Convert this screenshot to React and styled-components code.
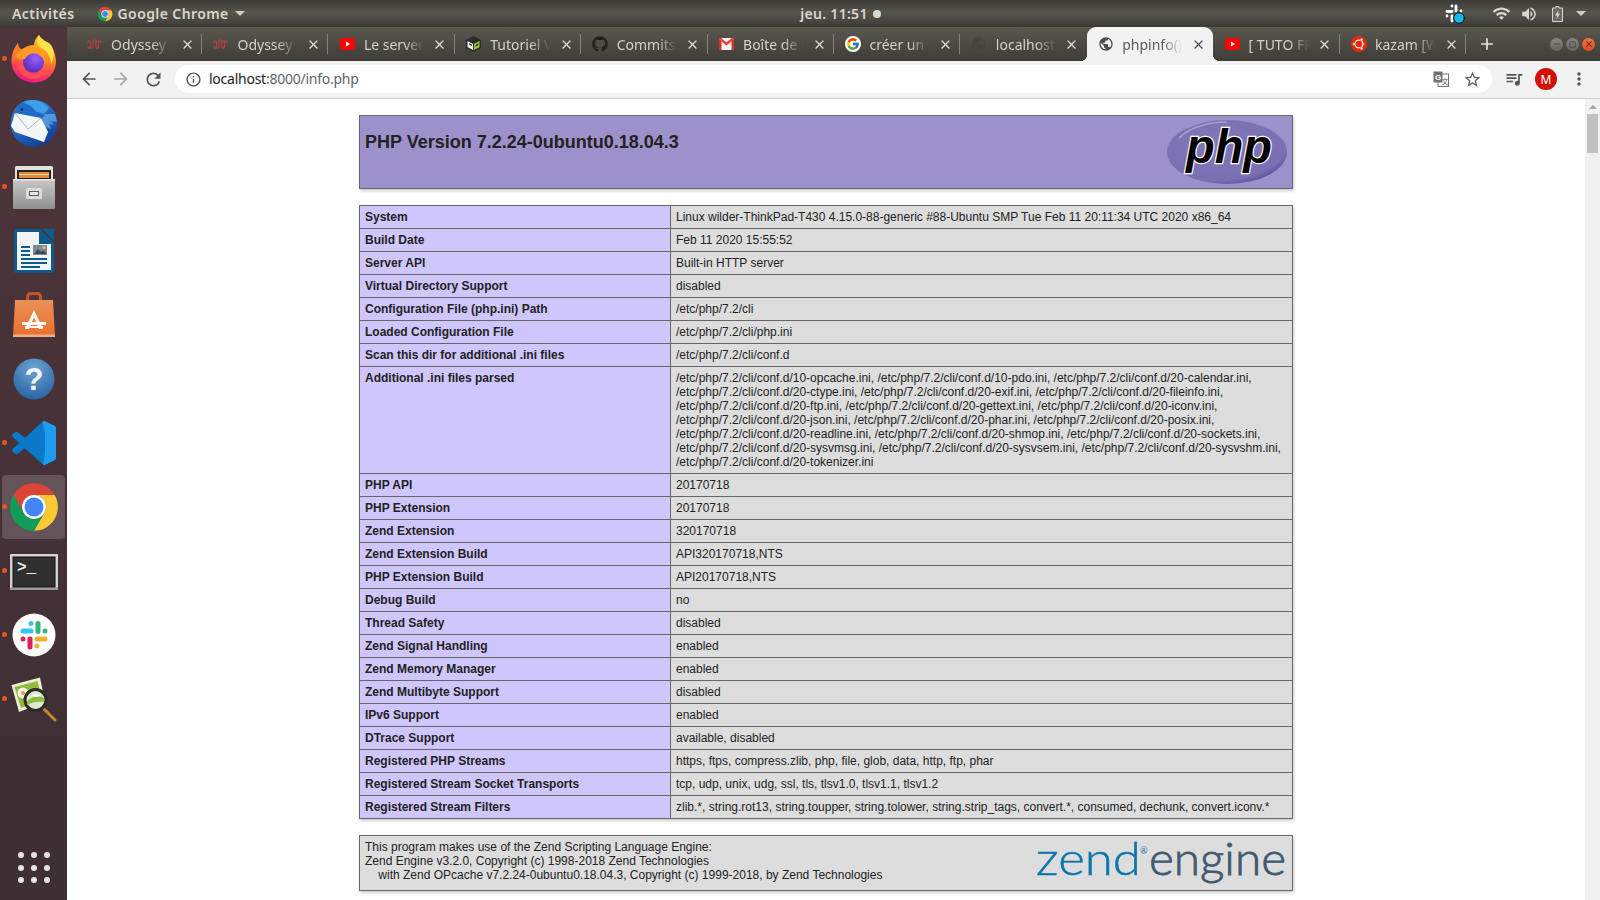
import React from 'react'
import styled, { createGlobalStyle } from 'styled-components'
import { FaGithub } from 'react-icons/fa'
import { FcGoogle } from 'react-icons/fc'
import {
  MdArrowBack, MdArrowForward, MdRefresh, MdInfoOutline, MdStarBorder, MdMoreVert,
  MdQueueMusic, MdPublic, MdWifi, MdVolumeUp, MdClose, MdAdd, MdRemove, MdCropSquare,
} from 'react-icons/md'

const GlobalStyle = createGlobalStyle`
  html, body { margin: 0; padding: 0; height: 100%; overflow: hidden; background: #fff; }
  * { box-sizing: border-box; }
`

const Screen = styled.div`
  width: 1600px;
  height: 900px;
  display: flex;
  flex-direction: column;
  overflow: hidden;
  font-family: "Noto Sans", "Open Sans", sans-serif;
`

/* gnome top bar */
const TopBar = styled.header`
  height: 27px;
  flex: none;
  display: grid;
  grid-template-columns: 1fr auto 1fr;
  align-items: center;
  padding: 0 14px 0 12px;
  background: linear-gradient(#3b3a36, #57544c 45%, #45433e 85%, #3a3935);
  color: #d8d6cf;
  font-size: 14px;
  font-weight: 600;
`
const BarLeft = styled.div`
  display: flex;
  align-items: center;
`
const BarCenter = styled.div`
  display: flex;
  align-items: center;
  gap: 5px;
  margin-left: 83px;
  letter-spacing: 0.3px;
`
const BarRight = styled.div`
  display: flex;
  align-items: center;
  justify-content: flex-end;
  color: #d8d6cf;
`
const Activities = styled.span`
  margin-right: 22px;
  letter-spacing: 0.45px;
`
const AppName = styled.span`
  margin: 0 6px 0 5px;
  letter-spacing: 0.4px;
`
const Caret = styled.span`
  width: 0;
  height: 0;
  border-left: 5px solid transparent;
  border-right: 5px solid transparent;
  border-top: 5px solid #cfcdc6;
`
const RecDot = styled.span`
  width: 8px;
  height: 8px;
  border-radius: 50%;
  background: #d9d8d3;
`
const Tray = styled.span`
  display: flex;
  align-items: center;
  margin-left: ${p => p.$gap}px;
`

const Body = styled.div`
  flex: 1;
  display: flex;
  min-height: 0;
`

/* launcher */
const Dock = styled.nav`
  width: 67px;
  flex: none;
  display: flex;
  flex-direction: column;
  background: linear-gradient(#4e343b, #3d2f34);
`
const DockItem = styled.div`
  position: relative;
  height: 64px;
  flex: none;
  display: flex;
  align-items: center;
  justify-content: center;
  &::before {
    content: '';
    display: ${p => (p.$active ? 'block' : 'none')};
    position: absolute;
    inset: 0 2px 0 2px;
    border-radius: 4px;
    background: rgba(255, 255, 255, 0.17);
  }
  &::after {
    content: '';
    display: ${p => (p.$running ? 'block' : 'none')};
    position: absolute;
    left: 2px;
    top: 29px;
    width: 5px;
    height: 5px;
    border-radius: 50%;
    background: #e95420;
  }
  svg { position: relative; }
`
const AppGrid = styled.div`
  margin-top: auto;
  margin-bottom: 17px;
  align-self: center;
  display: grid;
  grid-template-columns: repeat(3, 6px);
  gap: 6.5px 7px;
  span {
    width: 6px;
    height: 6px;
    border-radius: 50%;
    background: #e6e4e2;
  }
`

/* chrome */
const Browser = styled.div`
  flex: 1;
  min-width: 0;
  display: flex;
  flex-direction: column;
`
const TabStrip = styled.div`
  height: 34px;
  flex: none;
  display: flex;
  align-items: stretch;
  padding-left: 8.6px;
  background: linear-gradient(#5a574f, #3f3d38);
`
const Tab = styled.div`
  position: relative;
  width: 126.4px;
  flex: none;
  display: flex;
  align-items: center;
  padding-left: 11px;
  color: ${p => (p.$active ? '#5c5c5c' : '#d3d1ca')};
  background: ${p => (p.$active ? '#f2f2f2' : 'transparent')};
  border-radius: 9px 9px 0 0;
  font-size: 14px;
  &::after {
    content: '';
    display: ${p => (p.$sep ? 'block' : 'none')};
    position: absolute;
    right: 0;
    top: 7px;
    height: 20px;
    width: 1px;
    background: #85827a;
  }
`
const Flare = styled.span`
  position: absolute;
  bottom: 0;
  width: 7px;
  height: 7px;
  ${p => (p.$right
    ? 'right: -7px; background: radial-gradient(circle at 100% 0, transparent 7px, #f2f2f2 7.5px);'
    : 'left: -7px; background: radial-gradient(circle at 0 0, transparent 7px, #f2f2f2 7.5px);')}
`
const Favicon = styled.span`
  width: 16px;
  height: 16px;
  flex: none;
  display: flex;
  align-items: center;
  justify-content: center;
`
const TabTitle = styled.span`
  margin-left: 8.5px;
  width: 67px;
  flex: none;
  overflow: hidden;
  white-space: nowrap;
  -webkit-mask-image: linear-gradient(to right, #000 60%, transparent 90%);
  mask-image: linear-gradient(to right, #000 60%, transparent 90%);
`
const TabClose = styled.span`
  margin-left: 1.5px;
  display: flex;
  color: ${p => (p.$active ? '#4d4d4d' : '#e4e2dc')};
`
const NewTab = styled.span`
  display: flex;
  align-items: center;
  margin-left: 11px;
  color: #e8e6e0;
`
const WindowButtons = styled.div`
  margin-left: auto;
  padding-right: 5px;
  display: flex;
  align-items: center;
  gap: 3px;
`
const WinButton = styled.span`
  width: 13px;
  height: 13px;
  border-radius: 50%;
  display: flex;
  align-items: center;
  justify-content: center;
  color: ${p => (p.$close ? '#4a2010' : '#3e3c37')};
  background: ${p => (p.$close
    ? 'linear-gradient(#f0764a, #dc4a16)'
    : 'linear-gradient(#8b8880, #66635b)')};
`

const Toolbar = styled.div`
  height: 38px;
  flex: none;
  display: flex;
  align-items: center;
  padding: 0 0 1px 0;
  background: #f2f2f2;
  border-bottom: 1px solid #cdcdcd;
`
const NavButton = styled.span`
  width: 32px;
  flex: none;
  display: flex;
  justify-content: center;
  color: ${p => (p.$off ? '#a8a8a8' : '#555')};
`
const NavGroup = styled.div`
  display: flex;
  padding-left: 6px;
  margin-right: 6px;
`
const Omnibox = styled.div`
  width: 1317px;
  height: 28px;
  flex: none;
  display: flex;
  align-items: center;
  padding: 0 10px 0 10px;
  border-radius: 14px;
  background: #fff;
  color: #555;
  font-size: 14px;
`
const Url = styled.span`
  margin: -2px 0 0 7px;
  color: #5f6368;
  letter-spacing: -0.25px;
  b { font-weight: 400; color: #222; }
`
const OmniEnd = styled.div`
  margin-left: auto;
  display: flex;
  align-items: center;
  gap: 14px;
  color: #5f5f5f;
`
const Avatar = styled.span`
  width: 22px;
  height: 22px;
  border-radius: 50%;
  background: #d30f00;
  color: #fff;
  font-size: 12px;
  display: flex;
  align-items: center;
  justify-content: center;
  margin: 0 12px 0 11px;
`
const ToolIcon = styled.span`
  display: flex;
  color: #555;
  margin-left: ${p => p.$gap || 0}px;
`

/* page */
const Viewport = styled.div`
  flex: 1;
  min-height: 0;
  display: flex;
`
const Page = styled.main`
  flex: 1;
  min-width: 0;
  overflow: hidden;
  background: #fff;
  padding-top: 16px;
  color: #222;
  font-family: "Liberation Sans", Arial, sans-serif;
  font-size: 12px;
`
const Scrollbar = styled.div`
  width: 15px;
  flex: none;
  background: #f1f1f1;
  display: flex;
  flex-direction: column;
  align-items: center;
  padding-top: 6px;
`
const ScrollArrow = styled.span`
  width: 0;
  height: 0;
  border-left: 4px solid transparent;
  border-right: 4px solid transparent;
  border-bottom: 4px solid #a3a3a3;
`
const ScrollThumb = styled.span`
  width: 11px;
  height: 39px;
  margin-top: 5px;
  background: #c1c1c1;
`
const Box = styled.div`
  width: 934px;
  margin: 0 auto;
  display: flex;
  justify-content: space-between;
  border: 1px solid #666;
  padding: 4px 5px;
  background: ${p => (p.$head ? '#9c91ca' : '#ddd')};
  box-shadow: 1px 2px 3px #ccc;
`
const Title = styled.h1`
  margin: 12px 0 0;
  font-size: 18px;
  line-height: 20px;
  font-weight: 700;
`
const InfoTable = styled.table`
  width: 934px;
  margin: 16px auto;
  table-layout: fixed;
  border-collapse: collapse;
  box-shadow: 1px 2px 3px #ccc;
`
const KeyCell = styled.td`
  width: 311px;
  border: 1px solid #666;
  padding: 4px 5px;
  background: #cfc6fe;
  font-weight: 700;
  vertical-align: baseline;
`
const ValueCell = styled.td`
  border: 1px solid #666;
  padding: 4px 5px;
  background: #ddd;
  vertical-align: baseline;
  word-break: break-word;
`
const Credits = styled.div`
  line-height: 14px;
  white-space: pre;
`
const GoogleBadge = styled.span`
  display: flex;
  background: #fff;
  border-radius: 50%;
  padding: 1px;
`

/* favicons */
const OdysseyIcon = () => (
  <svg width="15" height="13" viewBox="0 0 15 13" fill="none" stroke="#b5403e" strokeWidth="1.2">
    <path d="M1 5c0-3 2.5-3 2.5 0v3c0 3 2.6 3 2.6 0V4c0-3 2.8-3 2.8 0v4c0 3 2.6 3 2.6 0V5c0-3 2.3-3 2.3 0" />
    <path d="M1 8c0 3 2.5 3 2.5 0M11.5 5c0-3-2.6-3-2.6 0" />
  </svg>
)
const YoutubeIcon = () => (
  <svg width="15" height="12" viewBox="0 0 15 12">
    <rect width="15" height="12" rx="3" fill="#f00" />
    <path d="M6 3.600 10 6 6 8.400z" fill="#fff" />
  </svg>
)
const CubeIcon = () => (
  <svg width="15" height="16" viewBox="0 0 15 16">
    <path d="M7.500 0 15 4v8l-7.500 4L0 12V4z" fill="#2d2d2a" />
    <path d="M1.500 5 7 8v6l-5.500-3z" fill="#f3f3ee" />
    <path d="M8 8l5.500-3v6L8 14z" fill="#a4cc38" />
    <path d="M3 7l3 1.700v1.500L3 8.500zM9.500 9l3-1.700V9l-3 1.700z" fill="#2d2d2a" />
  </svg>
)
const GmailIcon = () => (
  <svg width="15" height="12" viewBox="0 0 15 12">
    <rect width="15" height="12" fill="#f4f4f4" />
    <path d="M0 0h2.500v12H0zM12.500 0H15v12h-2.500z" fill="#d93025" />
    <path d="M0 0h2l5.500 4.300L13 0h2v1.500L7.500 7.400 0 1.500z" fill="#ea4335" />
  </svg>
)
const UbuntuIcon = () => (
  <svg width="16" height="16" viewBox="0 0 16 16">
    <circle cx="8" cy="8" r="8" fill="#e8290b" />
    <circle cx="8" cy="8" r="3.900" fill="none" stroke="#fff" strokeWidth="1.300" />
    <circle cx="3.100" cy="8" r="1.500" fill="#fff" stroke="#e8290b" strokeWidth="0.600" />
    <circle cx="10.500" cy="3.700" r="1.500" fill="#fff" stroke="#e8290b" strokeWidth="0.600" />
    <circle cx="10.500" cy="12.300" r="1.500" fill="#fff" stroke="#e8290b" strokeWidth="0.600" />
  </svg>
)

/* shared chrome wheel, 48 box */
const ChromeWheel = ({ size }) => {
  const sector = 'M24 13H43.050A22 22 0 0 0 4.950 13L14.470 29.500A11 11 0 0 1 24 13z'
  return (
    <svg width={size} height={size} viewBox="0 0 48 48">
      <path d={sector} fill="#db4437" />
      <path d={sector} fill="#fcc934" transform="rotate(120 24 24)" />
      <path d={sector} fill="#0f9d58" transform="rotate(240 24 24)" />
      <circle cx="24" cy="24" r="11" fill="#fff" />
      <circle cx="24" cy="24" r="8.700" fill="#4285f4" />
    </svg>
  )
}

/* launcher icons */
const FirefoxIcon = () => (
  <svg width="48" height="48" viewBox="0 0 48 48">
    <defs>
      <linearGradient id="ffa" x1="0.650" y1="0" x2="0.400" y2="1">
        <stop offset="0" stopColor="#ffd52e" />
        <stop offset="0.450" stopColor="#ff8a1f" />
        <stop offset="0.750" stopColor="#ff4055" />
        <stop offset="1" stopColor="#e8168a" />
      </linearGradient>
      <radialGradient id="ffb" cx="0.600" cy="0.300" r="0.750">
        <stop offset="0" stopColor="#9a62ff" />
        <stop offset="1" stopColor="#5427b8" />
      </radialGradient>
    </defs>
    <path d="M29 0C32 6 46 10 46 26 46 39 36 47.500 24 47.500 11 47.500 1.500 38 1.500 26 1.500 19 4 13 8 8 8 12 10 14 12 15 16 11 20 10 24 10 24 6 26 3 29 0z" fill="url(#ffa)" />
    <path d="M29 0C27 4 27 9 30 12 38 16 41 22 41 29 45 22 45 13 39 8 34 5.500 30 4 29 0z" fill="#ffe14a" />
    <circle cx="23.500" cy="27" r="10.500" fill="url(#ffb)" />
    <path d="M5 21C9 13 20 9.500 28 14 34 17 36.500 22 35 28 33 21 27 17.500 22 18.500 18 19.500 16 21.500 15 24 11 25 8 24 5 21z" fill="#ff9a26" />
    <path d="M8 8C8 12 10 14 12 15 9 17 6.500 19 5 21 4.500 16 5.500 12 8 8z" fill="#ff7a26" />
    <path d="M13.500 31C15 37 21 40 27 39 32 38 36 34 37.500 29 37 38 31 44 24 44 15 44 9 38 8 30 10 31.500 12 31.500 13.500 31z" fill="#ff5a4a" opacity="0.700" />
  </svg>
)
const ThunderbirdIcon = () => (
  <svg width="48" height="48" viewBox="0 0 48 48">
    <defs>
      <linearGradient id="tb" x1="0.200" y1="0" x2="0.750" y2="1">
        <stop offset="0" stopColor="#2f86dd" />
        <stop offset="0.650" stopColor="#1c58b5" />
        <stop offset="1" stopColor="#143a80" />
      </linearGradient>
    </defs>
    <circle cx="24" cy="24.500" r="23.500" fill="url(#tb)" />
    <path d="M4 12C7 6 13 2 20 1c7-.500 14 2 19 8l-5 6-10-3L8 14z" fill="#3f9fea" />
    <path d="M4 13 8 6C10 4 13 3.500 15 4l6 3 7 8-9 3z" fill="#1d6cc7" />
    <circle cx="12" cy="10.500" r="1.300" fill="#0b2244" />
    <path d="M47 23 41 22l3 4-5-1 2 5-5-2 1 6-4-3-1 7-8-6 11-17 10 0z" fill="#7cc4f4" opacity="0.550" />
    <path d="M5 14 31 19 38 33 34 43 5 33 1 27z" fill="#f4f5f7" />
    <path d="M5 14 18 30 31 19" fill="none" stroke="#aab3c0" strokeWidth="1" />
  </svg>
)
const FilesIcon = () => (
  <svg width="48" height="48" viewBox="0 0 48 48">
    <defs>
      <linearGradient id="fi" x1="0" y1="0" x2="0" y2="1">
        <stop offset="0" stopColor="#c9c9c9" />
        <stop offset="1" stopColor="#8f8f8f" />
      </linearGradient>
    </defs>
    <rect x="5" y="3" width="38" height="14" rx="1.500" fill="#e2e2e2" />
    <rect x="7" y="7" width="34" height="10" fill="#26231f" />
    <rect x="9" y="9" width="30" height="6" fill="#e48a3b" />
    <rect x="9" y="11" width="30" height="1" fill="#f6d7b0" />
    <rect x="3" y="16" width="42" height="30" rx="1.500" fill="url(#fi)" />
    <rect x="3" y="16" width="42" height="1.500" fill="#e9e9e9" />
    <rect x="16" y="25" width="16" height="11" rx="1.500" fill="#dcdcdc" />
    <rect x="19" y="28" width="10" height="5" fill="#5b5b5b" />
    <rect x="20" y="29" width="8" height="3" fill="#e8e8e8" />
  </svg>
)
const WriterIcon = () => (
  <svg width="48" height="48" viewBox="0 0 48 48">
    <path d="M6 2h24l14 14v28a2 2 0 0 1-2 2H6a2 2 0 0 1-2-2V4a2 2 0 0 1 2-2z" fill="#0f5a8c" />
    <path d="M7 5h22v12h12v26H7z" fill="#f2f4f6" />
    <path d="M32 2h12v12z" fill="#0f5a8c" />
    <rect x="11" y="19" width="9" height="2" fill="#0f5a8c" />
    <rect x="11" y="23" width="9" height="2" fill="#0f5a8c" />
    <rect x="11" y="27" width="9" height="2" fill="#0f5a8c" />
    <rect x="23" y="18" width="14" height="10" fill="#7b8a95" />
    <path d="M24 27l4-5 3 3 2-2 4 4z" fill="#3c4a55" />
    <circle cx="34" cy="20.500" r="1.500" fill="#e9c44a" />
    <rect x="11" y="31" width="26" height="2" fill="#0f5a8c" />
    <rect x="11" y="35" width="26" height="2" fill="#0f5a8c" />
    <rect x="11" y="39" width="19" height="2" fill="#0f5a8c" />
  </svg>
)
const SoftwareIcon = () => (
  <svg width="48" height="48" viewBox="0 0 48 48">
    <defs>
      <linearGradient id="sw" x1="0" y1="0" x2="0" y2="1">
        <stop offset="0" stopColor="#ea9156" />
        <stop offset="1" stopColor="#ed6d2c" />
      </linearGradient>
    </defs>
    <path d="M16 11V6c0-3 2-5 5-5h6c3 0 5 2 5 5v5h-3V6c0-1-1-2-2-2h-6c-1 0-2 1-2 2v5z" fill="#c4572a" />
    <path d="M5 9h38l2 37H3z" fill="url(#sw)" />
    <rect x="3" y="43.500" width="42" height="2.500" fill="#e9b08c" />
    <path d="M24 19l9 19h-4l-5-12-5 12h-4z" fill="#fff" />
    <rect x="12" y="31" width="24" height="3" fill="#fff" />
    <rect x="15" y="35" width="18" height="2" fill="#fff" />
  </svg>
)
const HelpIcon = () => (
  <svg width="48" height="48" viewBox="0 0 48 48">
    <defs>
      <radialGradient id="hp" cx="0.500" cy="0.250" r="0.850">
        <stop offset="0" stopColor="#6fa3d4" />
        <stop offset="1" stopColor="#1f5e9e" />
      </radialGradient>
    </defs>
    <circle cx="24" cy="24" r="20.500" fill="url(#hp)" />
    <text x="24" y="35" textAnchor="middle" fontFamily="Liberation Sans, sans-serif" fontWeight="700" fontSize="31" fill="#f4f7fa">?</text>
  </svg>
)
const VscodeIcon = () => (
  <svg width="44" height="44" viewBox="0 0 100 100">
    <path d="M70.900 99.300c1.600.6 3.400.6 5-.2l20.600-9.900c2.200-1 3.500-3.200 3.500-5.600V16.400c0-2.400-1.400-4.600-3.500-5.600L75.900.9c-2.100-1-4.500-.8-6.400.6-.3.2-.5.4-.8.7L29.300 38.100 12.200 25.100c-1.600-1.200-3.800-1.100-5.300.2l-5.500 5c-1.800 1.600-1.800 4.500 0 6.100L16.200 50 1.400 63.600c-1.800 1.600-1.800 4.500 0 6.100l5.500 5c1.500 1.300 3.700 1.400 5.300.2l17.100-13 39.400 35.900c.6.600 1.300 1.100 2.100 1.400zM75 27.300 45.100 50 75 72.700V27.300z" fill="#0a79c9" />
    <path d="M70.900 99.300c1.600.6 3.400.6 5-.2l20.600-9.900c2.200-1 3.500-3.200 3.500-5.600V16.400c0-2.400-1.400-4.600-3.500-5.600L75.900.9c-2.100-1-4.500-.8-6.400.6L75 27.300v45.400z" fill="#1f9cf0" />
  </svg>
)
const TerminalIcon = () => (
  <svg width="48" height="48" viewBox="0 0 48 48">
    <rect x="0" y="7" width="48" height="36" rx="1" fill="#d4d4d4" />
    <rect x="0" y="40.500" width="48" height="2.500" fill="#9a9a9a" />
    <rect x="2.500" y="9.500" width="43" height="31" fill="#0c0c0c" />
    <rect x="3.500" y="10.500" width="41" height="29" fill="#303030" />
    <text x="7" y="25" fontFamily="Liberation Mono, monospace" fontWeight="700" fontSize="16" fill="#ececec">&gt;_</text>
  </svg>
)
const SlackIcon = () => (
  <svg width="48" height="48" viewBox="0 0 48 48" strokeLinecap="round" strokeWidth="5" fill="none">
    <circle cx="24" cy="24" r="21.500" fill="#fff" />
    <path d="M13 20h8M21 12.500v.1" stroke="#36c5f0" />
    <path d="M28 12.500v8M35 20v.1" stroke="#2eb67d" />
    <path d="M27 28h8M27 35v.1" stroke="#ecb22e" />
    <path d="M20 28v8M13 28v.1" stroke="#e01e5a" />
  </svg>
)
const ViewerIcon = () => (
  <svg width="48" height="48" viewBox="0 0 48 48">
    <path d="M1.500 10 30 2.500 35 27 9 37z" fill="#f0ead9" />
    <path d="M4.500 12 27.500 6 32 25 11 33z" fill="#8fbb3a" />
    <circle cx="13" cy="18" r="5.500" fill="#f7f3e6" />
    <circle cx="13" cy="18" r="2" fill="#d8a62c" />
    <path d="M34 34 45 45" stroke="#c9852a" strokeWidth="3" strokeLinecap="round" />
    <circle cx="25.500" cy="25" r="10.500" fill="#dfe8cf" stroke="#2b2b2b" strokeWidth="3" />
    <path d="M17 27c3-5 11-7 17-4l0 4c-6-1-12 0-17 3z" fill="#8fbb3a" />
    <path d="M22 21c2-2 6-2 8 0-2 1-6 1-8 0z" fill="#fff" />
  </svg>
)
const SlackTray = () => (
  <svg width="20" height="20" viewBox="0 0 20 20" fill="none" strokeLinecap="round" strokeWidth="2.800">
    <path d="M2 7.500h5M7 2v.1M11 2v5M16 7v.1M11 16v.1M7 12v5M2 12v.1" stroke="#fff" />
    <circle cx="14" cy="14" r="5.300" fill="#14b9ea" stroke="#111" strokeWidth="1" />
  </svg>
)
const BatteryIcon = () => (
  <svg width="11" height="16" viewBox="0 0 11 16" fill="none">
    <path d="M4 .5h3v1.500h3.500V15.500H.5V2H4z" fill="#6b6962" stroke="#d8d6cf" strokeWidth="1" />
    <path d="M6.500 4 3 9.500h2.200L4.500 13 8 7.500H5.800z" fill="#d8d6cf" />
  </svg>
)
const TranslateIcon = () => (
  <svg width="16" height="16" viewBox="0 0 16 16">
    <rect x="5" y="3" width="10.500" height="12.500" fill="#fff" stroke="#707070" />
    <rect x="0.500" y="0.500" width="9" height="11" fill="#707070" />
    <text x="5" y="9" textAnchor="middle" fontFamily="Liberation Sans, sans-serif" fontWeight="700" fontSize="8" fill="#fff">G</text>
    <text x="12" y="12.500" textAnchor="middle" fontFamily="Noto Sans CJK SC, sans-serif" fontSize="6.500" fill="#555">文</text>
  </svg>
)
const PhpLogo = () => (
  <svg width="120" height="64" viewBox="0 0 120 64">
    <defs>
      <radialGradient id="phpBg" cx="0.400" cy="0.350" r="0.750">
        <stop offset="0" stopColor="#8177b8" />
        <stop offset="0.800" stopColor="#7a6fb2" />
        <stop offset="1" stopColor="#4c3f95" />
      </radialGradient>
    </defs>
    <ellipse cx="60" cy="32" rx="60" ry="32" fill="url(#phpBg)" />
    <path d="M12 18C24 6 44 2 60 2" fill="none" stroke="#a9a2cf" strokeWidth="1.500" />
    <text x="62" y="43" textAnchor="middle" fontFamily="Liberation Sans, sans-serif" fontWeight="700" fontStyle="italic" fontSize="49" fill="#000" stroke="#fff" strokeWidth="2.500" paintOrder="stroke" textLength="86" lengthAdjust="spacingAndGlyphs">php</text>
  </svg>
)
const ZendLogo = () => (
  <svg width="252" height="46" viewBox="0 0 252 46" fontFamily="Lato, sans-serif">
    <text x="1" y="35" fontSize="46" fontWeight="300" stroke="#0b76aa" strokeWidth="0.500" fill="#0b76aa" textLength="105" lengthAdjust="spacingAndGlyphs">zend</text>
    <text x="105" y="14" fontSize="9" fill="#0b76aa">®</text>
    <text x="114" y="35" fontSize="46" fontWeight="300" stroke="#41596f" strokeWidth="0.800" fill="#41596f" textLength="137" lengthAdjust="spacingAndGlyphs">engine</text>
  </svg>
)

const closeSize = 15
const globe = color => <MdPublic size={18} color={color} />

const tabs = [
  { title: 'Odyssey - Wild', icon: <OdysseyIcon />, sep: true },
  { title: 'Odyssey - Wild', icon: <OdysseyIcon />, sep: true },
  { title: 'Le serveur web', icon: <YoutubeIcon />, sep: true },
  { title: 'Tutoriel Vidéo', icon: <CubeIcon />, sep: true },
  { title: 'Commits · wild', icon: <FaGithub size={16} color="#22211f" />, sep: true },
  { title: 'Boîte de récep', icon: <GmailIcon />, sep: true },
  { title: 'créer un dossi', icon: <GoogleBadge><FcGoogle size={14} /></GoogleBadge>, sep: true },
  { title: 'localhost:8000', icon: globe('#45433f') },
  { title: 'phpinfo()', icon: globe('#4d4d4d'), active: true },
  { title: '[ TUTO FR ] Cr', icon: <YoutubeIcon />, sep: true },
  { title: 'kazam [Wiki ub', icon: <UbuntuIcon />, sep: true },
]

const dockApps = [
  { key: 'firefox', icon: <FirefoxIcon />, running: true },
  { key: 'thunderbird', icon: <ThunderbirdIcon /> },
  { key: 'files', icon: <FilesIcon />, running: true },
  { key: 'writer', icon: <WriterIcon /> },
  { key: 'software', icon: <SoftwareIcon /> },
  { key: 'help', icon: <HelpIcon /> },
  { key: 'vscode', icon: <VscodeIcon />, running: true },
  { key: 'chrome', icon: <ChromeWheel size={52} />, running: true, active: true },
  { key: 'terminal', icon: <TerminalIcon />, running: true },
  { key: 'slack', icon: <SlackIcon />, running: true },
  { key: 'viewer', icon: <ViewerIcon />, running: true },
]

const rows = [
  ['System', 'Linux wilder-ThinkPad-T430 4.15.0-88-generic #88-Ubuntu SMP Tue Feb 11 20:11:34 UTC 2020 x86_64'],
  ['Build Date', 'Feb 11 2020 15:55:52'],
  ['Server API', 'Built-in HTTP server'],
  ['Virtual Directory Support', 'disabled'],
  ['Configuration File (php.ini) Path', '/etc/php/7.2/cli'],
  ['Loaded Configuration File', '/etc/php/7.2/cli/php.ini'],
  ['Scan this dir for additional .ini files', '/etc/php/7.2/cli/conf.d'],
  ['Additional .ini files parsed', '/etc/php/7.2/cli/conf.d/10-opcache.ini, /etc/php/7.2/cli/conf.d/10-pdo.ini, /etc/php/7.2/cli/conf.d/20-calendar.ini, /etc/php/7.2/cli/conf.d/20-ctype.ini, /etc/php/7.2/cli/conf.d/20-exif.ini, /etc/php/7.2/cli/conf.d/20-fileinfo.ini, /etc/php/7.2/cli/conf.d/20-ftp.ini, /etc/php/7.2/cli/conf.d/20-gettext.ini, /etc/php/7.2/cli/conf.d/20-iconv.ini, /etc/php/7.2/cli/conf.d/20-json.ini, /etc/php/7.2/cli/conf.d/20-phar.ini, /etc/php/7.2/cli/conf.d/20-posix.ini, /etc/php/7.2/cli/conf.d/20-readline.ini, /etc/php/7.2/cli/conf.d/20-shmop.ini, /etc/php/7.2/cli/conf.d/20-sockets.ini, /etc/php/7.2/cli/conf.d/20-sysvmsg.ini, /etc/php/7.2/cli/conf.d/20-sysvsem.ini, /etc/php/7.2/cli/conf.d/20-sysvshm.ini, /etc/php/7.2/cli/conf.d/20-tokenizer.ini'],
  ['PHP API', '20170718'],
  ['PHP Extension', '20170718'],
  ['Zend Extension', '320170718'],
  ['Zend Extension Build', 'API320170718,NTS'],
  ['PHP Extension Build', 'API20170718,NTS'],
  ['Debug Build', 'no'],
  ['Thread Safety', 'disabled'],
  ['Zend Signal Handling', 'enabled'],
  ['Zend Memory Manager', 'enabled'],
  ['Zend Multibyte Support', 'disabled'],
  ['IPv6 Support', 'enabled'],
  ['DTrace Support', 'available, disabled'],
  ['Registered PHP Streams', 'https, ftps, compress.zlib, php, file, glob, data, http, ftp, phar'],
  ['Registered Stream Socket Transports', 'tcp, udp, unix, udg, ssl, tls, tlsv1.0, tlsv1.1, tlsv1.2'],
  ['Registered Stream Filters', 'zlib.*, string.rot13, string.toupper, string.tolower, string.strip_tags, convert.*, consumed, dechunk, convert.iconv.*'],
]

export default function App() {
  return (
    <Screen>
      <GlobalStyle />
      <TopBar>
        <BarLeft>
          <Activities>Activités</Activities>
          <ChromeWheel size={16} />
          <AppName>Google Chrome</AppName>
          <Caret />
        </BarLeft>
        <BarCenter>jeu. 11:51 <RecDot /></BarCenter>
        <BarRight>
          <SlackTray />
          <Tray $gap={27}><MdWifi size={19} /></Tray>
          <Tray $gap={9}><MdVolumeUp size={18} /></Tray>
          <Tray $gap={14}><BatteryIcon /></Tray>
          <Tray $gap={13}><Caret /></Tray>
        </BarRight>
      </TopBar>
      <Body>
        <Dock>
          {dockApps.map(app => (
            <DockItem key={app.key} $running={app.running} $active={app.active}>{app.icon}</DockItem>
          ))}
          <AppGrid>
            {Array.from({ length: 9 }).map((_, i) => <span key={i} />)}
          </AppGrid>
        </Dock>
        <Browser>
          <TabStrip>
            {tabs.map((tab, i) => (
              <Tab key={i} $active={tab.active} $sep={tab.sep}>
                {tab.active && <Flare />}
                <Favicon>{tab.icon}</Favicon>
                <TabTitle>{tab.title}</TabTitle>
                <TabClose $active={tab.active}><MdClose size={closeSize} /></TabClose>
                {tab.active && <Flare $right />}
              </Tab>
            ))}
            <NewTab><MdAdd size={20} /></NewTab>
            <WindowButtons>
              <WinButton><MdRemove size={10} /></WinButton>
              <WinButton><MdCropSquare size={9} /></WinButton>
              <WinButton $close><MdClose size={10} /></WinButton>
            </WindowButtons>
          </TabStrip>
          <Toolbar>
            <NavGroup>
              <NavButton><MdArrowBack size={20} /></NavButton>
              <NavButton $off><MdArrowForward size={20} /></NavButton>
              <NavButton><MdRefresh size={21} /></NavButton>
            </NavGroup>
            <Omnibox>
              <MdInfoOutline size={17} />
              <Url><b>localhost</b>:8000/info.php</Url>
              <OmniEnd>
                <TranslateIcon />
                <MdStarBorder size={19} />
              </OmniEnd>
            </Omnibox>
            <ToolIcon $gap={12}><MdQueueMusic size={20} /></ToolIcon>
            <Avatar>M</Avatar>
            <ToolIcon><MdMoreVert size={20} /></ToolIcon>
          </Toolbar>
          <Viewport>
            <Page>
              <Box $head>
                <Title>PHP Version 7.2.24-0ubuntu0.18.04.3</Title>
                <PhpLogo />
              </Box>
              <InfoTable>
                <tbody>
                  {rows.map(([key, value]) => (
                    <tr key={key}>
                      <KeyCell>{key}</KeyCell>
                      <ValueCell>{value}</ValueCell>
                    </tr>
                  ))}
                </tbody>
              </InfoTable>
              <Box>
                <Credits>{'This program makes use of the Zend Scripting Language Engine:\nZend Engine v3.2.0, Copyright (c) 1998-2018 Zend Technologies\n\u00a0\u00a0\u00a0\u00a0with Zend OPcache v7.2.24-0ubuntu0.18.04.3, Copyright (c) 1999-2018, by Zend Technologies'}</Credits>
                <ZendLogo />
              </Box>
            </Page>
            <Scrollbar>
              <ScrollArrow />
              <ScrollThumb />
            </Scrollbar>
          </Viewport>
        </Browser>
      </Body>
    </Screen>
  )
}
